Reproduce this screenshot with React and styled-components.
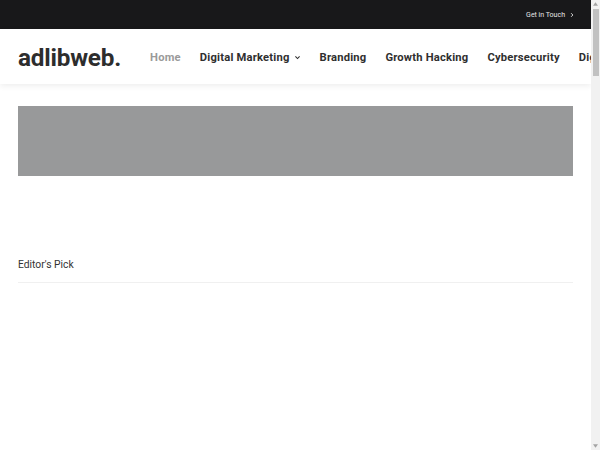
import styled, { createGlobalStyle } from "styled-components";

const GlobalStyle = createGlobalStyle`
    html, body {
        margin: 0;
        padding: 0;
        background: #fff;
        font-family: Roboto, "Liberation Sans", sans-serif;
    }
`;

const Page = styled.div`
    width: calc(100% - 9px);
    min-height: 900px;
    overflow-x: hidden;
`;

const TopBar = styled.div`
    background-color: #18181a;
    height: 29px;
    display: flex;
    justify-content: flex-end;
    align-items: center;
    padding: 0 16px;
`;

const TopLink = styled.a`
    color: #e6e6e6;
    font-size: 7px;
    text-decoration: none;
    display: flex;
    align-items: center;
    gap: 4px;
`;

const Header = styled.header`
    height: 55px;
    background: #fff;
    display: flex;
    align-items: center;
    padding-left: 18px;
    padding-top: 1px;
    box-sizing: border-box;
    box-shadow: 0 2px 6px rgba(0, 0, 0, 0.07);
    white-space: nowrap;
    overflow: hidden;
`;

const Logo = styled.div`
    font-size: 24.3px;
    font-weight: 700;
    color: #2d2d2d;
    letter-spacing: -0.2px;
    margin-right: 29px;
`;

const Nav = styled.nav`
    display: flex;
    align-items: center;
    gap: 19px;
`;

const NavItem = styled.a`
    font-size: 11.2px;
    font-weight: 700;
    letter-spacing: 0.2px;
    color: ${(p) => (p.$active ? "#9a9a9a" : "#2f2f2f")};
    text-decoration: none;
    display: flex;
    align-items: center;
    gap: 4px;
`;

const Container = styled.main`
    padding: 22px 18px 0;
`;

const Banner = styled.div`
    height: 70px;
    background-color: #98999a;
`;

const SectionTitle = styled.div`
    margin-top: 82px;
    font-size: 10.3px;
    color: #333;
    padding-bottom: 11px;
    border-bottom: 1px solid #f0f0f0;
`;

const ScrollTrack = styled.div`
    position: fixed;
    top: 0;
    right: 0;
    width: 9px;
    height: 100vh;
    background: #f1f1f1;
    display: flex;
    flex-direction: column;
    align-items: center;
    justify-content: space-between;
    padding: 2px 0;
    box-sizing: border-box;
`;

const ScrollThumb = styled.div`
    width: 6px;
    height: 67px;
    background: #c1c1c1;
    margin-top: 3px;
    flex: none;
`;

const ScrollSpacer = styled.div`
    flex: 1;
`;

const Chevron = ({ size = 6, dir = "down", color = "currentColor" }) => (
    <svg width={size} height={size} viewBox="0 0 10 10" fill="none">
        <path
            d={dir === "down" ? "M2 3.5 L5 6.5 L8 3.5" : "M3.5 2 L6.5 5 L3.5 8"}
            stroke={color}
            strokeWidth="1.5"
        />
    </svg>
);

const Arrow = ({ up }) => (
    <svg width="5" height="4" viewBox="0 0 6 4">
        <path d={up ? "M0 4 L3 0 L6 4 Z" : "M0 0 L3 4 L6 0 Z"} fill="#a3a3a3" />
    </svg>
);

const navItems = ["Home", "Digital Marketing", "Branding", "Growth Hacking", "Cybersecurity", "Digital Transformation"];

export default function App() {
    return (
        <Page>
            <GlobalStyle />
            <TopBar>
                <TopLink href="#">Get in Touch <Chevron size={6} dir="right" /></TopLink>
            </TopBar>
            <Header>
                <Logo>adlibweb.</Logo>
                <Nav>
                    {navItems.map((item, idx) => (
                        <NavItem key={item} href="#" $active={idx === 0}>
                            {item}
                            {item === "Digital Marketing" && <Chevron size={7} />}
                        </NavItem>
                    ))}
                </Nav>
            </Header>
            <Container>
                <Banner />
                <SectionTitle>Editor's Pick</SectionTitle>
            </Container>
            <ScrollTrack>
                <Arrow up />
                <ScrollThumb />
                <ScrollSpacer />
                <Arrow />
            </ScrollTrack>
        </Page>
    );
}
